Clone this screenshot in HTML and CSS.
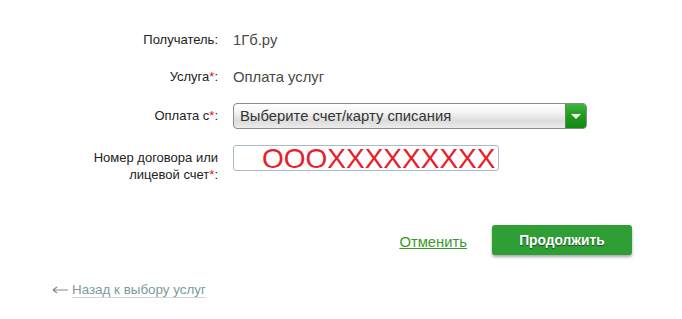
FILE: index.html
```html
<!DOCTYPE html>
<html lang="ru">
<head>
<meta charset="utf-8">
<title>Оплата услуг</title>
<link rel="stylesheet" href="styles.css">
</head>
<body>
<div class="page">
  <div class="form">
    <div class="row r1">
      <div class="label">Получатель:</div>
      <div class="value">1Гб.ру</div>
    </div>
    <div class="row r2">
      <div class="label">Услуга<span class="req">*</span>:</div>
      <div class="value">Оплата услуг</div>
    </div>
    <div class="row r3">
      <div class="label">Оплата с<span class="req">*</span>:</div>
      <div class="value">
        <div class="select">
          <span class="select-text">Выберите счет/карту списания</span>
          <span class="select-btn"><span class="tri"></span></span>
        </div>
      </div>
    </div>
    <div class="row r4">
      <div class="label two">Номер договора или<br>лицевой счет<span class="req">*</span>:</div>
      <div class="value">
        <div class="input">OOOXXXXXXXXX</div>
      </div>
    </div>
  </div>
  <div class="actions">
    <a class="cancel" href="#">Отменить</a>
    <button class="submit" type="button">Продолжить</button>
  </div>
  <div class="back">
    <svg class="arrow" width="16" height="8" viewBox="0 0 16 8"><path d="M1 4H16M1 4L5 1M1 4L5 7" stroke="#8a8a8a" stroke-width="1.2" fill="none"/></svg>
    <a class="back-link" href="#">Назад к выбору услуг</a>
  </div>
</div>
</body>
</html>
```
FILE: styles.css
```css
html, body {
  margin: 0;
  padding: 0;
  background: #fff;
}
body {
  font-family: "Liberation Sans", Arial, sans-serif;
  font-size: 13px;
  color: #333;
}
.page {
  width: 682px;
  height: 319px;
  position: relative;
}
.form {
  padding-top: 30px;
}
.row {
  display: grid;
  grid-template-columns: 218px 1fr;
  column-gap: 15px;
  align-items: center;
}
.label {
  text-align: right;
  color: #222;
  line-height: 20px;
}
.value {
  color: #4a4a4a;
  font-size: 14.8px;
  line-height: 20px;
}
.req {
  color: #e0141e;
}
.r1 { height: 20px; }
.r2 { height: 20px; margin-top: 17px; }
.r3 { height: 26px; margin-top: 16px; }
.r4 { margin-top: 16px; align-items: start; }
.label.two {
  line-height: 17px;
  padding-top: 4px;
}
.select {
  width: 352px;
  height: 24px;
  border: 1px solid #8a8a8a;
  border-radius: 4px;
  display: flex;
  overflow: hidden;
  background: linear-gradient(#ffffff 0%, #f4f4f4 35%, #dcdcdc 70%, #ececec 100%);
  box-shadow: inset 0 1px 0 #fff;
}
.select-text {
  flex: 1;
  padding-left: 6px;
  line-height: 24px;
  color: #333;
  font-size: 14.8px;
}
.select-btn {
  width: 20px;
  border-left: 1px solid #5a8a5a;
  background: linear-gradient(#3cb83c 0%, #1f9a1f 50%, #138a13 100%);
  display: flex;
  align-items: center;
  justify-content: center;
}
.tri {
  width: 0;
  height: 0;
  border-left: 5px solid transparent;
  border-right: 5px solid transparent;
  border-top: 5px solid #fff;
}
.input {
  width: 236px;
  height: 24px;
  border: 1px solid #a9b8c6;
  border-radius: 3px;
  padding-left: 28px;
  font-size: 28px;
  line-height: 25px;
  color: #e8202a;
  white-space: nowrap;
}
.actions {
  display: flex;
  justify-content: flex-end;
  align-items: center;
  gap: 25px;
  margin-top: 42px;
  padding-right: 50px;
}
.cancel {
  color: #3a9a26;
  text-decoration: underline;
  font-size: 14.8px;
  position: relative;
  top: 2px;
}
.submit {
  width: 140px;
  height: 30px;
  border: none;
  border-radius: 3px;
  background: #2e9e35;
  color: #fff;
  font-family: "Liberation Sans", Arial, sans-serif;
  font-weight: bold;
  font-size: 13.8px;
  text-shadow: 0 1px 1px #1a4a1a;
  box-shadow: 0 2px 3px rgba(0,0,0,0.35);
  cursor: pointer;
}
.back {
  margin-top: 27px;
  padding-left: 52px;
  display: flex;
  align-items: center;
  gap: 4px;
}
.back-link {
  color: #7a9c9c;
  text-decoration: none;
  border-bottom: 1px solid #d4d4d4;
  line-height: 15px;
  font-size: 13.4px;
}
```
